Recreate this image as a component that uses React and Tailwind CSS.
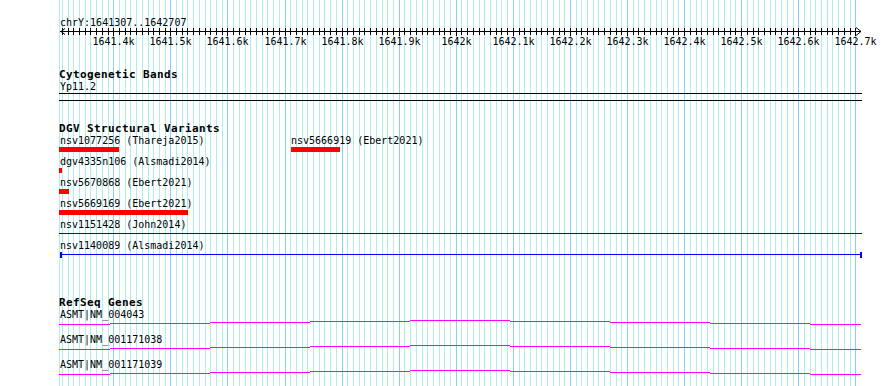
import React from 'react';

// region shown: chrY:1641307..1642707, drawn from x=60 to x=861
const START = 1641307;
const END = 1642707;
const X0 = 59; // left edge of the panel
const px = (bp) => Math.round(60.2 + (bp - START) * 0.5708);

const minorTicks = [];
for (let bp = Math.ceil(START / 10) * 10; bp <= END; bp += 10) minorTicks.push(bp);
const majorTicks = minorTicks.filter((bp) => bp % 100 === 0);

const tickLabel = (bp) => {
    const k = bp / 1000;
    return `${Number.isInteger(k) ? k : k.toFixed(1)}k`;
};

const Grid = () => (
    <svg className="absolute left-0 top-0 pointer-events-none" width="890" height="386">
        <line x1={X0 + 0.5} x2={X0 + 0.5} y1="0" y2="386" stroke="#afeeee" />
        {minorTicks.map((bp) => (
            <line
                key={bp}
                x1={px(bp) + 0.5}
                x2={px(bp) + 0.5}
                y1="0"
                y2="386"
                stroke={bp % 100 === 0 ? '#87cefa' : '#afeeee'}
            />
        ))}
    </svg>
);

const Ruler = () => (
    <svg width="803" height="8" className="block overflow-visible">
        <line x1={60 - X0} x2={861 - X0} y1="4.5" y2="4.5" stroke="#000" />
        {minorTicks.map((bp) => (
            <line
                key={bp}
                x1={px(bp) - X0 + 0.5}
                x2={px(bp) - X0 + 0.5}
                y1="1"
                y2={bp % 100 === 0 ? 9 : 8}
                stroke="#000"
            />
        ))}
        <polyline points={`${65 - X0},1.5 ${61 - X0},4.5 ${65 - X0},7.5`} fill="none" stroke="#000" />
        <polyline points={`${856 - X0},0.5 ${861 - X0},4.5 ${856 - X0},8.5`} fill="none" stroke="#000" />
    </svg>
);

const Title = ({ children }) => (
    <div className="h-[12px] leading-[13px] text-[11px] font-bold tracking-[0.38px] whitespace-nowrap">{children}</div>
);

const Label = ({ children, className = '' }) => (
    <div className={`h-[13px] leading-[13px] text-[10px] whitespace-nowrap ${className}`}>{children}</div>
);

const Feature = ({ label, barClass, className = '' }) => (
    <div className={className}>
        <Label className="pl-px">{label}</Label>
        <div className="h-[5px]">
            <div className={`h-[5px] bg-[#ff0000] ${barClass}`} />
        </div>
    </div>
);

// shallow arch drawn by the gene glyph, step every 100px
const archSteps = [
    [59, 110, 4], [110, 210, 3], [210, 310, 2], [310, 410, 1], [410, 510, 0],
    [510, 610, 1], [610, 710, 2], [710, 810, 3], [810, 861, 4],
];

const Gene = ({ name }) => (
    <div className="h-[25px]">
        <Label className="pl-px">{name}</Label>
        <svg width="803" height="12" className="block -mt-[3px]">
            {archSteps.map(([a, b, dy]) => (
                <rect key={a} x={a - X0} y={2 + dy} width={b - a} height="1" fill="#ff00ff" />
            ))}
        </svg>
    </div>
);

export default function App() {
    return (
        <div className="relative w-[890px] h-[386px] bg-white overflow-hidden text-black font-['DejaVu_Sans_Mono',monospace]">
            <Grid />
            <div className="relative ml-[59px] w-[803px] pt-[16px]">
                {/* ruler */}
                <div className="h-[11px] leading-[13px] text-[10px] pl-px whitespace-nowrap">chrY:1641307..1642707</div>
                <Ruler />
                <div className="relative h-[13px]">
                    {majorTicks.map((bp) => (
                        <span
                            key={bp}
                            className="absolute top-0 leading-[13px] text-[10px] -translate-x-1/2 whitespace-nowrap"
                            style={{ left: px(bp) - X0 + 0.5 }}
                        >
                            {tickLabel(bp)}
                        </span>
                    ))}
                </div>

                {/* cytogenetic bands */}
                <div className="mt-[20px]">
                    <Title>Cytogenetic Bands</Title>
                    <Label className="pl-px">Yp11.2</Label>
                    <div className="h-px bg-black" />
                    <div className="mt-[6px] h-px bg-black" />
                </div>

                {/* DGV */}
                <div className="mt-[21px] flex flex-col">
                    <Title>DGV Structural Variants</Title>
                    <div className="flex">
                        <Feature className="w-[232px] mb-[3px]" label="nsv1077256 (Thareja2015)" barClass="w-[60px]" />
                        <div>
                            <Label>nsv5666919 (Ebert2021)</Label>
                            <div className="h-[5px] w-[49px] bg-[#ff0000]" />
                        </div>
                    </div>
                    <Feature className="mb-[3px]" label="dgv4335n106 (Alsmadi2014)" barClass="w-[3px]" />
                    <Feature className="mb-[3px]" label="nsv5670868 (Ebert2021)" barClass="w-[10px]" />
                    <Feature className="mb-[3px]" label="nsv5669169 (Ebert2021)" barClass="w-[129px]" />
                    <div className="mb-[3px]">
                        <Label className="pl-px">nsv1151428 (John2014)</Label>
                        <div className="h-[5px] pt-[2px]">
                            <div className="h-px bg-[#0000ff]" />
                        </div>
                    </div>
                    <div>
                        <Label className="pl-px">nsv1140089 (Alsmadi2014)</Label>
                        <div className="h-[5px] ml-px w-[802px] flex items-center">
                            <div className="w-[2px] h-[6px] bg-[#0000ff]" />
                            <div className="flex-1 h-px bg-[#0000ff]" />
                            <div className="w-[2px] h-[6px] bg-[#0000ff]" />
                        </div>
                    </div>
                </div>

                {/* RefSeq */}
                <div className="mt-[39px]">
                    <Title>RefSeq Genes</Title>
                    <Gene name="ASMT|NM_004043" />
                    <Gene name="ASMT|NM_001171038" />
                    <Gene name="ASMT|NM_001171039" />
                </div>
            </div>
        </div>
    );
}
